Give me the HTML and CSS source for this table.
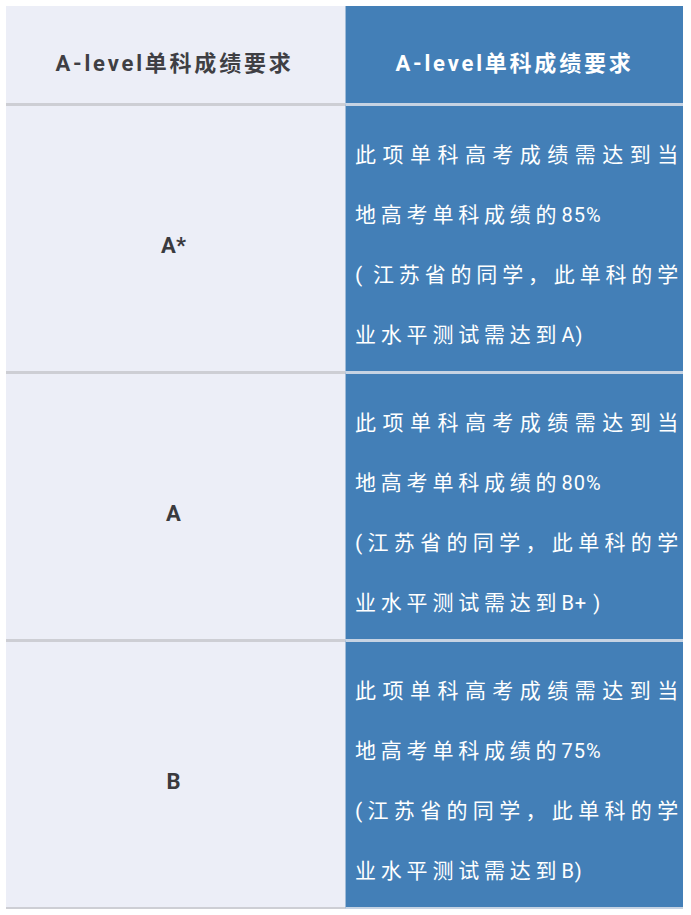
FILE: index.html
```html
<!DOCTYPE html>
<html lang="zh-CN">
<head>
<meta charset="utf-8">
<title>A-level单科成绩要求</title>
<link rel="stylesheet" href="styles.css">
</head>
<body>
<div class="table">
  <div class="cell head-left">A-level单科成绩要求</div>
  <div class="cell head-right">A-level单科成绩要求</div>

  <div class="cell grade">A*</div>
  <div class="cell req"><p>此项单科高考成绩需达到当地高考单科成绩的<span class="lat">85%</span></p><p>(<span class="lat">&nbsp;</span>江苏省的同学，此单科的学业水平测试需达到<span class="lat">A)</span></p></div>

  <div class="cell grade">A</div>
  <div class="cell req"><p>此项单科高考成绩需达到当地高考单科成绩的<span class="lat">80%</span></p><p>(江苏省的同学，此单科的学业水平测试需达到<span class="lat">B+ )</span></p></div>

  <div class="cell grade last">B</div>
  <div class="cell req last"><p>此项单科高考成绩需达到当地高考单科成绩的<span class="lat">75%</span></p><p>(江苏省的同学，此单科的学业水平测试需达到<span class="lat">B)</span></p></div>
</div>
</body>
</html>
```

FILE: styles.css
```css
html, body {
  margin: 0;
  padding: 0;
  background: #ffffff;
}

body {
  font-family: Roboto, "Noto Sans CJK SC", sans-serif;
}

.table {
  display: grid;
  grid-template-columns: 339px 338px;
  margin: 6px 8px 0 6px;
}

.cell {
  box-sizing: border-box;
}

.head-left,
.head-right {
  height: 97px;
  padding-top: 12px;
  display: flex;
  align-items: center;
  justify-content: center;
  font-size: 22px;
  font-weight: 700;
  letter-spacing: 2.8px;
}

.head-left {
  background: #eceef7;
  color: #3f3f44;
  padding-right: 2px;
}

.head-right {
  background: #437fb7;
  color: #ffffff;
  border-left: 1px solid #9fbbd8;
}

.grade {
  background: #eceef7;
  color: #3a3a3e;
  border-top: 3px solid #cdced4;
  font-size: 22px;
  font-weight: 700;
  display: flex;
  align-items: center;
  justify-content: center;
  padding-top: 14px;
  padding-right: 4px;
}

.req {
  background: #437fb7;
  color: #ffffff;
  border-top: 3px solid #c6d3e3;
  border-left: 1px solid #9fbbd8;
  padding: 19px 0 6px 9px;
  font-size: 21px;
  line-height: 60px;
  letter-spacing: 4.8px;
  text-align: justify;
}

.req p {
  margin: 0;
}

.lat {
  font-size: 20px;
  line-height: 1;
  letter-spacing: 1px;
}

.grade.last,
.req.last {
  border-bottom: 2px solid #cdced4;
}

.req.last {
  border-bottom-color: #c6d3e3;
}
```
